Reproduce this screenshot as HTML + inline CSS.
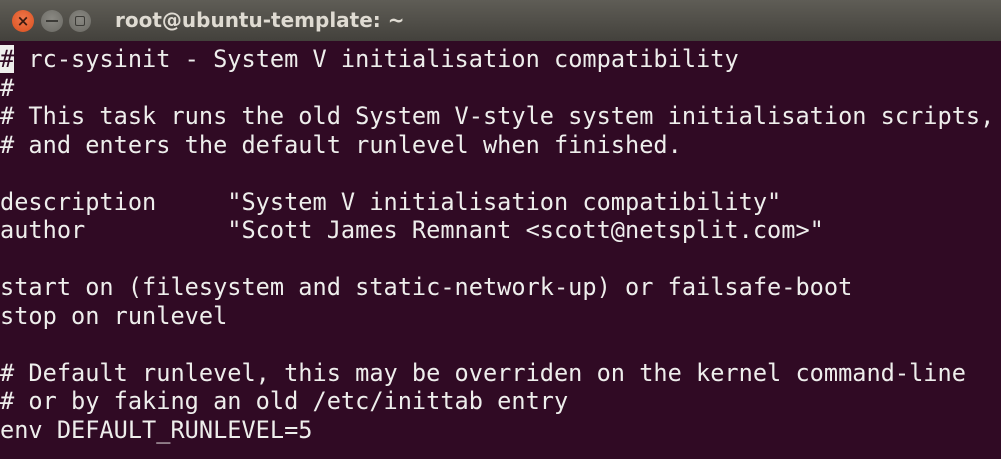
<!DOCTYPE html>
<html><head><style>
html,body{margin:0;padding:0;width:1001px;height:459px;overflow:hidden;background:#300a24;}
.tb{position:absolute;left:0;top:0;width:1001px;height:41px;background:linear-gradient(#5f5d56,#43413c);}
.c{position:absolute;top:10px;width:22px;height:22px;border-radius:50%;}
.t{position:absolute;left:115px;top:8px;font:bold 20px "DejaVu Sans","Liberation Sans",sans-serif;color:#dfdbd2;}
pre{position:absolute;left:0;top:45px;margin:0;font-family:"DejaVu Sans Mono","Liberation Mono",monospace;font-size:23.6px;line-height:28.5px;color:#eeeeec;}
.cur{background:#eeeeec;color:#300a24;}
</style></head><body>
<div class="tb">
<div class="c" style="left:12px;background:radial-gradient(circle at 50% 40%,#f0764a,#d9501f);"></div>
<div style="position:absolute;left:16px;top:10px;width:14px;height:22px;color:#3a1a10;font:bold 15px 'DejaVu Sans',sans-serif;line-height:22px;text-align:center;left:16px">×</div>
<div class="c" style="left:41px;background:radial-gradient(circle at 50% 40%,#8a8983,#6a6963);"></div>
<div style="position:absolute;left:46px;top:20px;width:12px;height:2px;background:#3c3b37"></div>
<div class="c" style="left:69px;background:radial-gradient(circle at 50% 40%,#8a8983,#6a6963);"></div>
<div style="position:absolute;left:75px;top:16px;width:8px;height:8px;border:1.5px solid #3c3b37;border-radius:2px"></div>
<div class="t">root@ubuntu-template: ~</div>
</div>
<pre><span class="cur">#</span> rc-sysinit - System V initialisation compatibility
#
# This task runs the old System V-style system initialisation scripts,
# and enters the default runlevel when finished.

description     "System V initialisation compatibility"
author          "Scott James Remnant &lt;scott@netsplit.com&gt;"

start on (filesystem and static-network-up) or failsafe-boot
stop on runlevel

# Default runlevel, this may be overriden on the kernel command-line
# or by faking an old /etc/inittab entry
env DEFAULT_RUNLEVEL=5</pre>
</body></html>
